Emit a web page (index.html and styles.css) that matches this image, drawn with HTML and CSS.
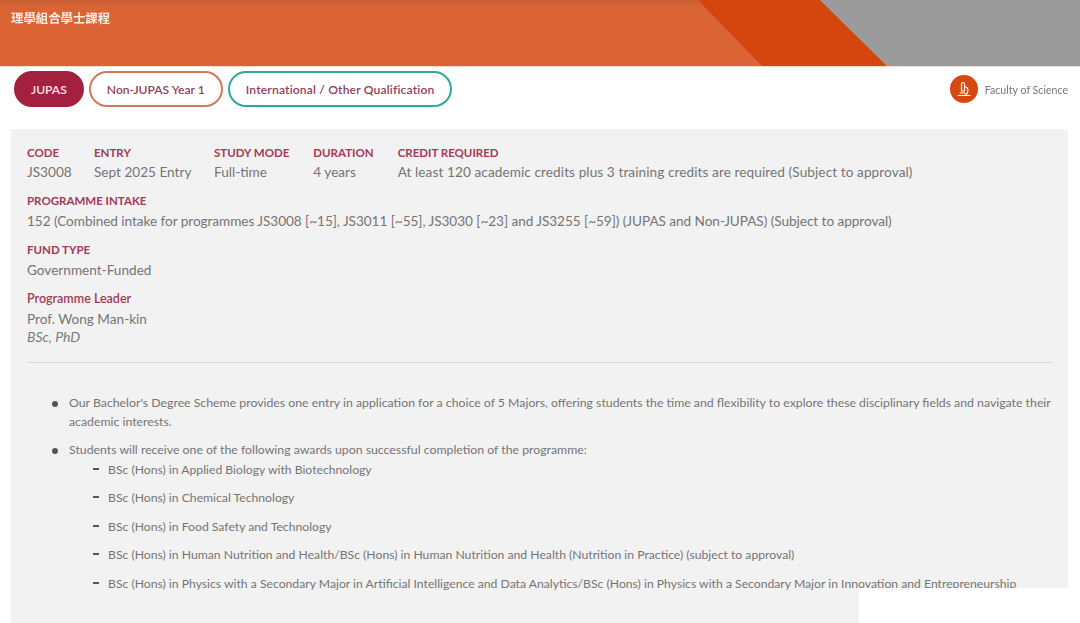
FILE: index.html
```html
<!DOCTYPE html>
<html lang="zh-Hant">
<head>
    <meta charset="UTF-8">
    <title>JS3008</title>
    <link rel="stylesheet" href="styles.css">
</head>
<body>
<div class="banner">
    <svg class="banner-art" width="1080" height="66" viewBox="0 0 1080 66">
        <polygon points="698,0 820,0 887,66 762,66" fill="#d5450e"/>
        <polygon points="820,0 1080,0 1080,66 887,66" fill="#9b9b9b"/>
    </svg>
    <div class="banner-title">理學組合學士課程</div>
</div>

<div class="tabbar">
    <div class="tabs">
        <div class="tab tab-active">JUPAS</div>
        <div class="tab tab-orange">Non-JUPAS Year 1</div>
        <div class="tab tab-teal">International / Other Qualification</div>
    </div>
    <div class="faculty">
        <div class="faculty-icon">
            <svg width="18" height="18" viewBox="0 0 18 18" fill="none" stroke="#fff" stroke-width="1.2" stroke-linecap="round">
                <path d="M6.5 4a1.5 1.5 0 0 1 3 0v7h-3z"/>
                <path d="M9.5 6.5c2.5.6 3.7 2.4 3.4 4.6-.2 1.4-1 2.8-2.4 3.6"/>
                <path d="M5 13h5"/>
                <path d="M3 15.5h12"/>
            </svg>
        </div>
        <span class="faculty-name">Faculty of Science</span>
    </div>
</div>

<div class="panel">
    <div class="facts">
        <div class="fact fact-code">
            <div class="label">CODE</div>
            <div class="value">JS3008</div>
        </div>
        <div class="fact fact-entry">
            <div class="label">ENTRY</div>
            <div class="value">Sept 2025 Entry</div>
        </div>
        <div class="fact">
            <div class="label">STUDY MODE</div>
            <div class="value">Full-time</div>
        </div>
        <div class="fact">
            <div class="label">DURATION</div>
            <div class="value">4 years</div>
        </div>
        <div class="fact">
            <div class="label">CREDIT REQUIRED</div>
            <div class="value value-credit">At least 120 academic credits plus 3 training credits are required (Subject to approval)</div>
        </div>
    </div>
    <div class="block">
        <div class="label">PROGRAMME INTAKE</div>
        <div class="value value-intake">152 (Combined intake for programmes JS3008 [~15], JS3011 [~55], JS3030 [~23] and JS3255 [~59]) (JUPAS and Non-JUPAS) (Subject to approval)</div>
    </div>
    <div class="block">
        <div class="label">FUND TYPE</div>
        <div class="value">Government-Funded</div>
    </div>
    <div class="block">
        <div class="label label-title">Programme Leader</div>
        <div class="value">Prof. Wong Man-kin</div>
        <div class="degree">BSc, PhD</div>
    </div>
    <hr class="rule">
    <ul class="notes">
        <li>Our Bachelor's Degree Scheme provides one entry in application for a choice of 5 Majors, offering students the time and flexibility to explore these disciplinary fields and navigate their academic interests.</li>
        <li>Students will receive one of the following awards upon successful completion of the programme:
            <ul class="awards">
                <li>BSc (Hons) in Applied Biology with Biotechnology</li>
                <li>BSc (Hons) in Chemical Technology</li>
                <li>BSc (Hons) in Food Safety and Technology</li>
                <li>BSc (Hons) in Human Nutrition and Health/BSc (Hons) in Human Nutrition and Health (Nutrition in Practice) (subject to approval)</li>
                <li>BSc (Hons) in Physics with a Secondary Major in Artificial Intelligence and Data Analytics/BSc (Hons) in Physics with a Secondary Major in Innovation and Entrepreneurship</li>
            </ul>
        </li>
    </ul>
</div>
<div class="corner-cover"></div>
</body>
</html>
```

FILE: styles.css
```css
html, body {
    height: 623px;
    overflow: hidden;
}

body {
    margin: 0;
    background-color: #fff;
    font-family: 'Lato', 'Noto Sans CJK TC', sans-serif;
    color: #757575;
    filter: blur(0.3px);
}

div.banner {
    position: relative;
    height: 66px;
    background: linear-gradient(to bottom, #c75f33 0, #db6334 8px, #dc6335 100%);
    border-bottom: 1px solid #f3ddd2;
}

svg.banner-art {
    position: absolute;
    left: 0;
    top: 0;
}

div.banner-title {
    position: relative;
    padding: 11px 0 0 11px;
    font-size: 12.4px;
    line-height: 15px;
    font-weight: bold;
    color: #fbeee6;
}

div.tabbar {
    display: flex;
    justify-content: space-between;
    align-items: center;
    height: 36px;
    padding: 4px 12px 22px 14px;
}

div.tabs {
    display: flex;
    gap: 5px;
}

div.tab {
    height: 32px;
    line-height: 33px;
    border-radius: 18px;
    border: 2px solid;
    padding: 0 16px;
    font-size: 12.1px;
    font-weight: 600;
    color: #8f3f5a;
    background-color: #fff;
}

div.tab-active {
    padding: 0 15px;
    background-color: #a3213f;
    border-color: #a3213f;
    color: #fbe6ea;
}

div.tab-orange {
    border-color: #d2785a;
}

div.tab-teal {
    letter-spacing: 0.16px;
    border-color: #2ea8a0;
}

div.faculty {
    display: flex;
    align-items: center;
    gap: 7px;
    font-size: 10.6px;
    color: #77777a;
}

span.faculty-name {
    margin-top: 1px;
}

div.faculty-icon {
    display: flex;
    align-items: center;
    justify-content: center;
    width: 28px;
    height: 28px;
    border-radius: 50%;
    background-color: #d5480f;
}

div.panel {
    margin: 0 12px 0 11px;
    height: 494px;
    padding: 15px 16px 0;
    box-sizing: border-box;
    background-color: #f2f2f2;
    overflow: hidden;
}

div.facts {
    display: flex;
    gap: 24px;
}

div.fact-code {
    width: 43px;
}

div.fact-entry {
    width: 96px;
    white-space: nowrap;
}

div.label {
    font-size: 11.5px;
    line-height: 18px;
    font-weight: bold;
    color: #a33a55;
}

div.label-title {
    font-size: 12.5px;
    font-weight: 600;
}

div.value {
    font-size: 13.6px;
    line-height: 20px;
}

div.value-credit {
    letter-spacing: 0.09px;
}

div.value-intake {
    letter-spacing: -0.05px;
}

div.block {
    margin-top: 10px;
}

div.block div.value {
    margin-top: 1px;
}

div.degree {
    margin-top: -1px;
    font-size: 14px;
    line-height: 17px;
    font-style: italic;
    color: #7a7a7a;
}

hr.rule {
    border: none;
    border-top: 1px solid #d9d9d9;
    margin: 17px 0 0;
}

ul.notes {
    list-style: none;
    margin: 30px 0 0;
    padding: 0 0 0 42px;
    font-size: 12.29px;
    line-height: 19px;
}

ul.notes > li {
    position: relative;
    margin-bottom: 9px;
}

ul.notes > li::before {
    content: "";
    position: absolute;
    left: -17px;
    top: 8px;
    width: 6px;
    height: 6px;
    border-radius: 50%;
    background-color: #555;
}

ul.awards {
    list-style: none;
    margin: 1px 0 0;
    padding: 0 0 0 39px;
    font-size: 12.2px;
}

ul.awards li {
    position: relative;
    margin-bottom: 9.4px;
}

ul.awards li::before {
    content: "";
    position: absolute;
    left: -15px;
    top: 8px;
    width: 6px;
    height: 2px;
    background-color: #555;
}

div.corner-cover {
    position: absolute;
    left: 859px;
    top: 588px;
    width: 221px;
    height: 35px;
    background-color: #fff;
}
```
